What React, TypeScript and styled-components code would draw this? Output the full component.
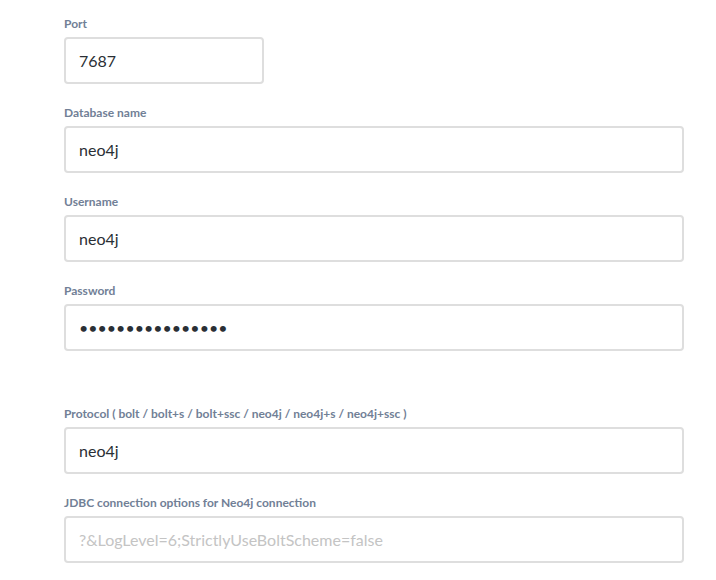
import styled, { createGlobalStyle } from "styled-components";

const GlobalStyle = createGlobalStyle`
  body {
    margin: 0;
    background: #fff;
    font-family: Lato, "Open Sans", sans-serif;
  }
`;

interface FieldDef {
  label: string;
  value?: string;
  placeholder?: string;
  type?: string;
  short?: boolean;
  spaced?: boolean;
}

const fields: FieldDef[] = [
  { label: "Port", value: "7687", short: true },
  { label: "Database name", value: "neo4j" },
  { label: "Username", value: "neo4j" },
  { label: "Password", value: "passwordpassword", type: "password" },
  {
    label: "Protocol ( bolt / bolt+s / bolt+ssc / neo4j / neo4j+s / neo4j+ssc )",
    value: "neo4j",
    spaced: true,
  },
  {
    label: "JDBC connection options for Neo4j connection",
    placeholder: "?&LogLevel=6;StrictlyUseBoltScheme=false",
  },
];

const App = () => {
  return (
    <>
      <GlobalStyle />
      <FormStyle>
        {fields.map((f) => (
          <Field key={f.label} $spaced={f.spaced}>
            <Label>{f.label}</Label>
            <Input
              $short={f.short}
              type={f.type || "text"}
              defaultValue={f.value}
              placeholder={f.placeholder}
              readOnly
            />
          </Field>
        ))}
      </FormStyle>
    </>
  );
};

const FormStyle = styled.div`
  display: flex;
  flex-direction: column;
  gap: 21px;
  width: 620px;
  padding: 16px 0 0 64px;
`;

const Field = styled.div<{ $spaced?: boolean }>`
  display: flex;
  flex-direction: column;
  gap: 5px;
  margin-top: ${({ $spaced }) => ($spaced ? "34px" : "0")};
`;

const Label = styled.label`
  font-size: 12px;
  line-height: 16px;
  font-weight: 700;
  color: #718096;
`;

const Input = styled.input<{ $short?: boolean }>`
  box-sizing: border-box;
  width: ${({ $short }) => ($short ? "200px" : "620px")};
  height: 47px;
  padding: 0 13px;
  border: 2px solid #dedede;
  border-radius: 4px;
  font-family: Lato, "Open Sans", sans-serif;
  font-size: 16px;
  color: #2a2f35;
  outline: none;
  background: #fff;

  &::placeholder {
    color: #c4c4c4;
  }
`;

export default App;
